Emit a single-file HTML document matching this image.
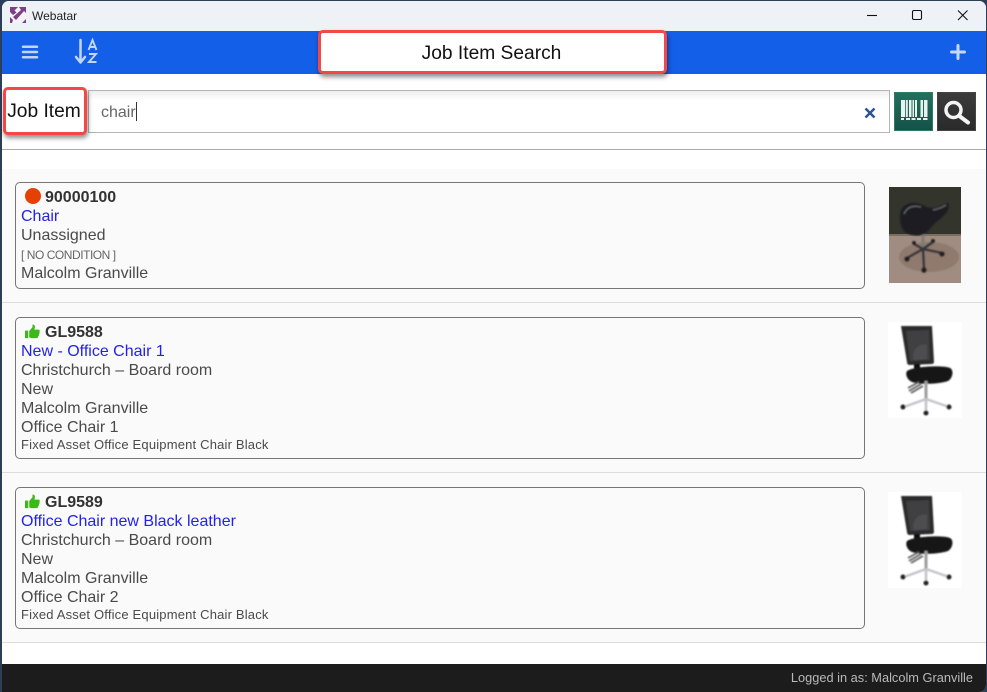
<!DOCTYPE html>
<html><head><meta charset="utf-8">
<style>
html,body{margin:0;padding:0;width:987px;height:692px;overflow:hidden;background:#2c3f58;font-family:"Liberation Sans",sans-serif;}
#win{position:absolute;left:2px;top:1px;width:984px;height:691px;background:#fff;border-radius:7px 7px 7px 0;overflow:hidden;}
.a{position:absolute;}
#page{position:absolute;left:0;top:0;width:987px;height:692px;}
.t{position:absolute;white-space:nowrap;font-size:16px;line-height:19px;color:#4a4a4a;left:21px;}
.b{font-weight:bold;color:#333;}
.l{color:#2222ee;}
.s{font-size:13px;letter-spacing:.18px;}
.card{position:absolute;left:15px;width:848px;background:#fafafa;border:1px solid #767676;border-radius:5px;}
.sep{position:absolute;left:2px;width:984px;height:1px;background:#dcdcdc;}
.red{position:absolute;background:#fff;border:3px solid #f44848;border-radius:5px;box-shadow:1px 3px 5px rgba(0,0,0,.45);box-sizing:border-box;color:#111;text-align:center;}
</style></head><body>
<div id="win"></div>
<div id="page">
<div class="a" style="left:2px;top:1px;width:984px;height:30px;background:#eef2f6;border-radius:7px 7px 0 0"></div>
<svg class="a" style="left:10px;top:7px" width="16" height="16" viewBox="0 0 16 16"><rect width="16" height="16" fill="#f6f3f7"/><path d="M0 0h8L4.500 3.500 6.500 5.500 3 8 0 5zM16 0v6l-2-2-8 9-3-3 8-7-2-3zM0 10l3 3-1 3H0zM12 16l4-4v4z" fill="#7d3f86"/></svg>
<div class="a" style="left:32px;top:9px;font-size:12px;line-height:14px;color:#222">Webatar</div>
<svg class="a" style="left:860px;top:5px" width="110" height="22" viewBox="0 0 110 22"><path d="M7 10.500h10" stroke="#111" stroke-width="1.100" fill="none"/><rect x="52.500" y="5.500" width="9" height="9" rx="1.500" fill="none" stroke="#111" stroke-width="1.100"/><path d="M98 5.500l9.500 9.500M107.500 5.500L98 15" stroke="#111" stroke-width="1.100" fill="none"/></svg>

<div class="a" style="left:2px;top:31px;width:984px;height:43px;background:#145fe8"></div>
<svg class="a" style="left:20px;top:44px" width="20" height="16" viewBox="0 0 20 16"><path d="M3 2.700h14M3 8h14M3 13.300h14" stroke="#c2d6f9" stroke-width="2.500" stroke-linecap="round"/></svg>
<svg class="a" style="left:72px;top:37px" width="30" height="30" viewBox="0 0 30 30"><path d="M8.500 3v22M4 20l4.500 5.500L13 20" stroke="#c2d6f9" stroke-width="2.500" fill="none" stroke-linecap="round" stroke-linejoin="round"/><path d="M16.500 13l4-10 4 10M18 10h5M17 17h7l-7 8h7.500" stroke="#c2d6f9" stroke-width="1.900" fill="none"/></svg>
<svg class="a" style="left:948px;top:41.500px" width="20" height="20" viewBox="0 0 20 20"><path d="M10 3.500v13M3.500 10h13" stroke="#c5d8fa" stroke-width="3" stroke-linecap="round"/></svg>

<div class="red" style="left:318px;top:30px;width:349px;height:44px;font-size:19.200px;line-height:42px;padding-right:2px">Job Item Search</div>

<div class="a" style="left:88px;top:90px;width:800px;height:41px;background:linear-gradient(#eee,#fff 9px);border:1px solid #b5b5b5"></div>
<div class="a" style="left:101px;top:102.500px;font-size:16px;line-height:19px;color:#666">chair</div>
<div class="a" style="left:136px;top:102px;width:1px;height:19px;background:#333"></div>
<div class="red" style="left:3px;top:87px;width:84px;height:48px;font-size:19.200px;line-height:44px;white-space:nowrap;padding-right:2px">Job Item</div>
<svg class="a" style="left:864px;top:107px" width="12" height="12" viewBox="0 0 12 12"><path d="M1.500 1.500l9 9M10.500 1.500l-9 9" stroke="#2d5496" stroke-width="2.500"/></svg>

<div class="a" style="left:894px;top:92px;width:39px;height:39px;box-sizing:border-box;background:linear-gradient(#24705f,#145247);border:1px solid #2b7b6a"></div>
<svg class="a" style="left:894px;top:92px" width="39" height="39" viewBox="0 0 39 39"><path d="M7 8h4v17H7zM11.800 8h2v17h-2zM15 8h2.500v17H15zM18.500 8h1.500v17h-1.500zM21 8h2v17h-2zM26.500 8h2.500v17h-2.500zM30 8h3.500v17H30z" fill="#e8f2ef"/><path d="M7 26h3v2H7zM12 26h4v2h-4zM17.500 26h4v2h-4zM23 26h4v2h-4zM29 26h4.500v2H29z" fill="#e8f2ef"/></svg>
<div class="a" style="left:937px;top:92px;width:39px;height:39px;box-sizing:border-box;background:linear-gradient(#3c3c3c,#2a2a2a);border:1px solid #444"></div>
<svg class="a" style="left:937px;top:92px" width="39" height="39" viewBox="0 0 39 39"><circle cx="16.500" cy="18" r="7.500" fill="none" stroke="#f4f4f4" stroke-width="3.500"/><path d="M23 24.500l8 6" stroke="#f4f4f4" stroke-width="4" stroke-linecap="round"/></svg>

<div class="a" style="left:2px;top:149px;width:984px;height:1px;background:#aaa"></div>
<div class="a" style="left:2px;top:169px;width:984px;height:474px;background:#fafafa"></div>
<div class="sep" style="top:302px"></div><div class="sep" style="top:472px"></div><div class="sep" style="top:642px"></div>

<div class="card" style="top:182px;height:105px"></div>
<div class="a" style="left:25px;top:188px;width:16px;height:16px;border-radius:50%;background:#e64004"></div>
<div class="t b" style="left:45px;top:188px">90000100</div>
<div class="t l" style="top:207px">Chair</div>
<div class="t" style="top:226px">Unassigned</div>
<div class="t" style="top:246px;font-size:12px;letter-spacing:-.46px;color:#666">[ NO CONDITION ]</div>
<div class="t" style="top:264px">Malcolm Granville</div>

<svg class="a" style="left:889px;top:187px" width="72" height="96" viewBox="0 0 72 96">
<defs><filter id="bl"><feGaussianBlur stdDeviation=".7"/></filter></defs>
<rect width="72" height="96" fill="#a08c80"/><rect width="72" height="48" fill="#33342c"/><rect y="47" width="72" height="2" fill="#77705f"/>
<g filter="url(#bl)"><ellipse cx="40" cy="70" rx="30" ry="15" fill="#8f7a6d"/>
<path d="M34 46v14" stroke="#807a75" stroke-width="3"/>
<path d="M11 30C11 20 17 16 25 16C33 16 38 22 45 21C50 20 55 17 59 16C61 22 57 28 51 32C45 36 41 42 37 46C31 50 20 49 15 44C12 40 11 36 11 30Z" fill="#1c1e20"/>
<path d="M15 27C18 20 24 18 32 20M44 23C49 22 54 20 57 18" stroke="#5c5f61" stroke-width="1.500" fill="none"/>
<path d="M34 62L18 71M34 62L53 66M34 62L35 81M34 62L44 55M34 62L25 57" stroke="#35353a" stroke-width="2.600"/>
<circle cx="18" cy="72" r="2.800" fill="#222"/><circle cx="53" cy="67" r="2.800" fill="#222"/><circle cx="35" cy="83" r="2.800" fill="#222"/><circle cx="44" cy="54" r="2" fill="#222"/><circle cx="25" cy="56" r="2" fill="#222"/></g>
</svg>

<div class="card" style="top:317px;height:140px"></div>
<svg class="a" style="left:25px;top:323.500px" width="15" height="15" viewBox="0 0 16 16"><path d="M0 7h3.500v8H0zM4.500 7.500L8 3.500V0.500c2 0 3 1.500 2.500 3.500L10 6h4.500c1.500 0 1.500 2 .8 2.500.6.800.3 2-.5 2.300.3.900 0 1.900-.8 2.200.2 1-.5 2-1.500 2H7c-1 0-2-.5-2.500-.7z" fill="#3cb81a"/></svg>
<div class="t b" style="left:45px;top:323px">GL9588</div>
<div class="t l" style="top:342px">New - Office Chair 1</div>
<div class="t" style="top:361px">Christchurch – Board room</div>
<div class="t" style="top:380px">New</div>
<div class="t" style="top:399px">Malcolm Granville</div>
<div class="t" style="top:418px">Office Chair 1</div>
<div class="t s" style="top:435px">Fixed Asset Office Equipment Chair Black</div>
<svg class="a" style="left:888px;top:322px" width="74" height="96" viewBox="0 0 74 96">
<rect width="74" height="96" fill="#fff"/>
<g filter="url(#bl)"><path d="M13 4h31l2 36c0 1-1 2-2 2l-22 1c-2 0-3-1-3-3z" fill="#2a2a2c"/>
<path d="M18 9l23-1 1 30-20 1z" fill="#414143"/>
<path d="M25 33c2-8 8-12 14-10v14l-13 1z" fill="#4e4e50"/>
<path d="M26 42h6v6h-6z" fill="#111"/>
<path d="M19 49c6-5 38-6 43-3 4 2 3 10-2 13-8 3-27 4-36 1-5-2-7-8-5-11z" fill="#171717"/>
<path d="M20 66l11-6M21 69l12-7M23 71l12-7" stroke="#606060" stroke-width="1.800"/>
<path d="M38 59v20" stroke="#9c9c9c" stroke-width="3"/>
<path d="M38 77L16 85M38 77l23 8M38 78v12" stroke="#c4c4c8" stroke-width="2.500"/>
<circle cx="15" cy="85" r="2.500" fill="#222"/><circle cx="61" cy="85" r="2.500" fill="#222"/><circle cx="38" cy="91" r="2.500" fill="#222"/></g>
</svg>

<div class="card" style="top:487px;height:140px"></div>
<svg class="a" style="left:25px;top:493.500px" width="15" height="15" viewBox="0 0 16 16"><path d="M0 7h3.500v8H0zM4.500 7.500L8 3.500V0.500c2 0 3 1.500 2.500 3.500L10 6h4.500c1.500 0 1.500 2 .8 2.500.6.800.3 2-.5 2.300.3.900 0 1.900-.8 2.200.2 1-.5 2-1.500 2H7c-1 0-2-.5-2.500-.7z" fill="#3cb81a"/></svg>
<div class="t b" style="left:45px;top:493px">GL9589</div>
<div class="t l" style="top:512px">Office Chair new Black leather</div>
<div class="t" style="top:531px">Christchurch – Board room</div>
<div class="t" style="top:550px">New</div>
<div class="t" style="top:569px">Malcolm Granville</div>
<div class="t" style="top:588px">Office Chair 2</div>
<div class="t s" style="top:605px">Fixed Asset Office Equipment Chair Black</div>
<svg class="a" style="left:888px;top:492px" width="74" height="96" viewBox="0 0 74 96">
<rect width="74" height="96" fill="#fff"/>
<g filter="url(#bl)"><path d="M13 4h31l2 36c0 1-1 2-2 2l-22 1c-2 0-3-1-3-3z" fill="#2a2a2c"/>
<path d="M18 9l23-1 1 30-20 1z" fill="#414143"/>
<path d="M25 33c2-8 8-12 14-10v14l-13 1z" fill="#4e4e50"/>
<path d="M26 42h6v6h-6z" fill="#111"/>
<path d="M19 49c6-5 38-6 43-3 4 2 3 10-2 13-8 3-27 4-36 1-5-2-7-8-5-11z" fill="#171717"/>
<path d="M20 66l11-6M21 69l12-7M23 71l12-7" stroke="#606060" stroke-width="1.800"/>
<path d="M38 59v20" stroke="#9c9c9c" stroke-width="3"/>
<path d="M38 77L16 85M38 77l23 8M38 78v12" stroke="#c4c4c8" stroke-width="2.500"/>
<circle cx="15" cy="85" r="2.500" fill="#222"/><circle cx="61" cy="85" r="2.500" fill="#222"/><circle cx="38" cy="91" r="2.500" fill="#222"/></g>
</svg>

<div class="a" style="left:2px;top:664px;width:984px;height:28px;background:#1c1c1c;border-radius:0 0 7px 0"></div>
<div class="a" style="right:14px;top:670px;font-size:12.800px;line-height:16px;color:#b9b9b9;white-space:nowrap">Logged in as: Malcolm Granville</div>
</div>
</body></html>
